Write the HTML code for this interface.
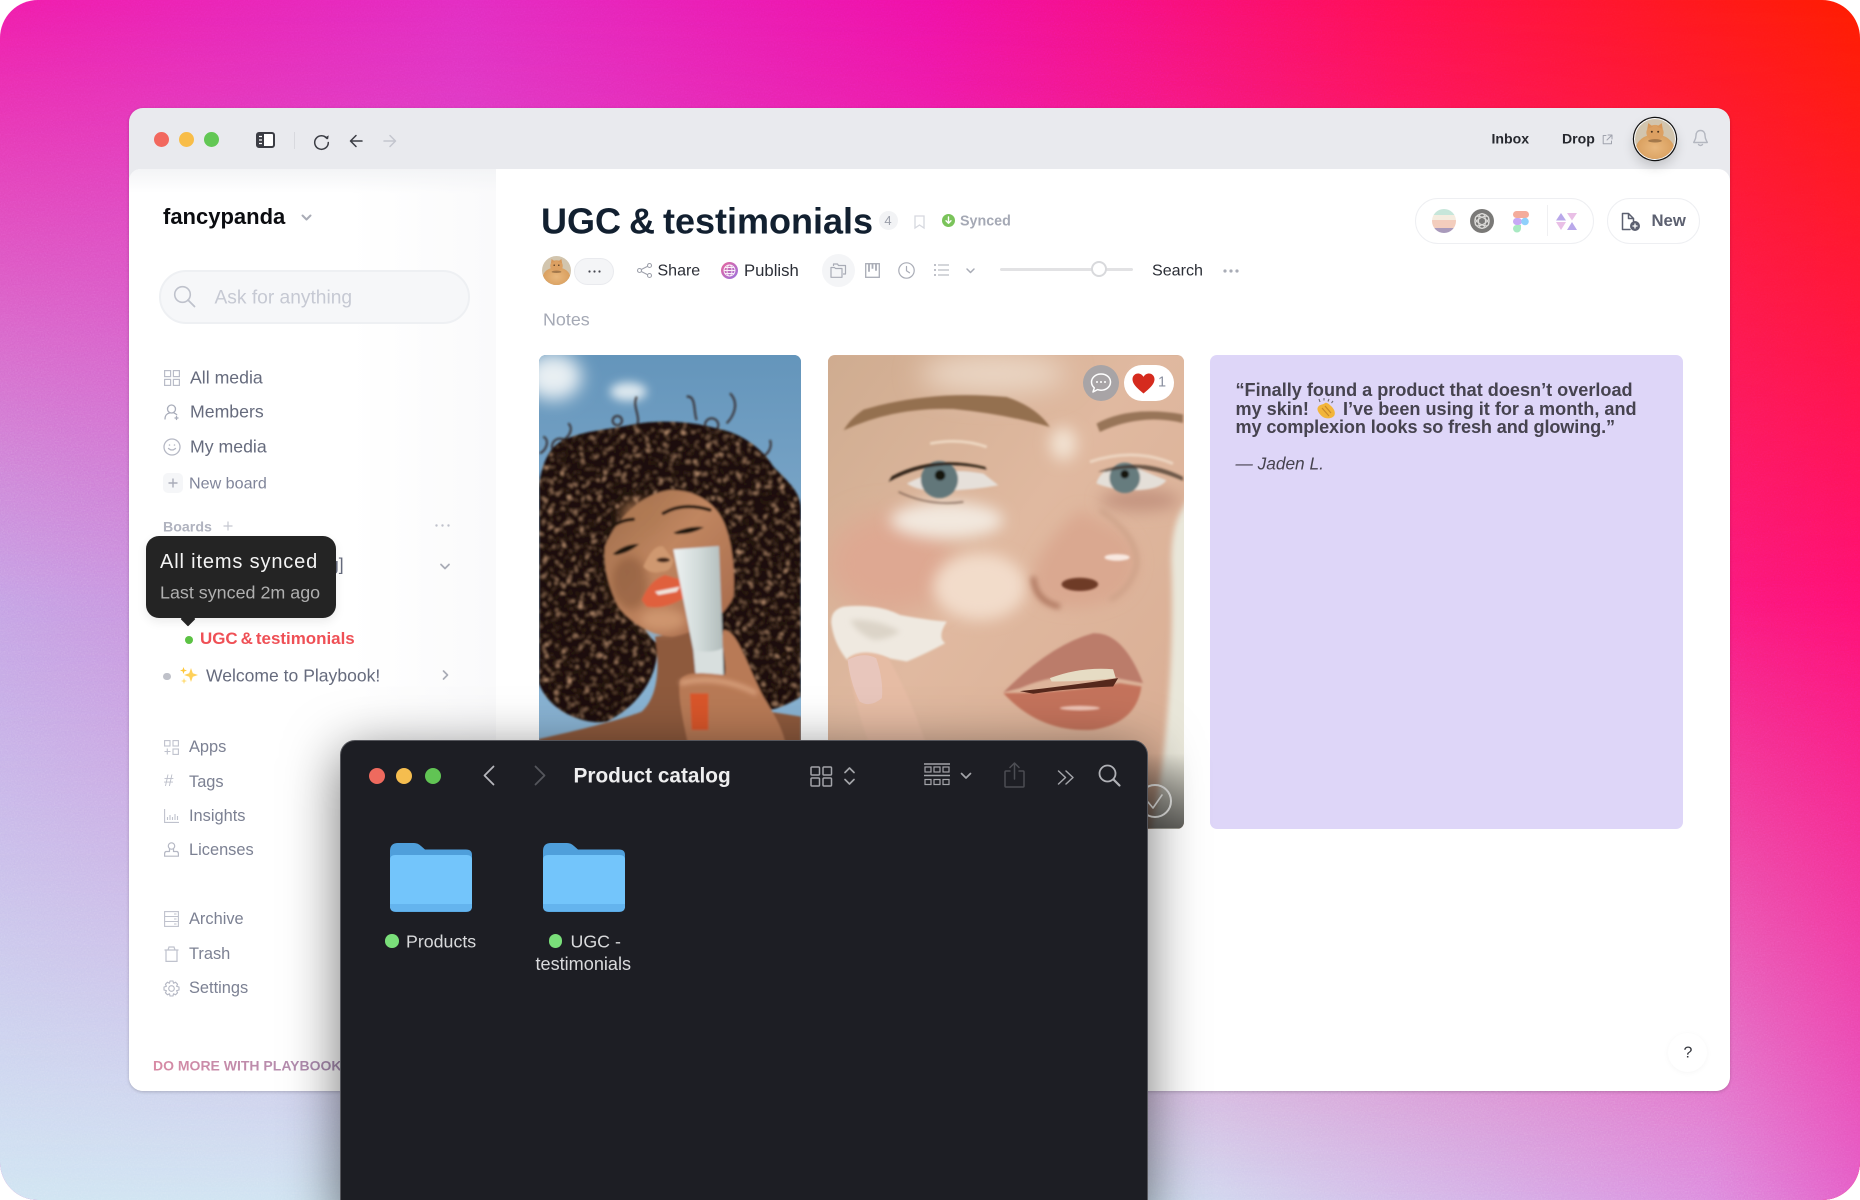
<!DOCTYPE html>
<html><head><meta charset="utf-8"><title>Playbook</title>
<style>
html,body{margin:0;padding:0;width:1860px;height:1200px;overflow:hidden;background:#fff;font-family:"Liberation Sans",sans-serif}
.a{position:absolute}
.t{position:absolute;white-space:nowrap;transform:translateY(-50%);line-height:1.2}
svg{display:block;overflow:visible}
.n{color:#666b7d;font-size:17.7px;left:190px}
.m{color:#7c8193;font-size:16.4px;left:189px}
.s{fill:none;stroke-linecap:round;stroke-linejoin:round}
.note{font-weight:700;font-size:18.1px;color:#46434f}
</style></head><body>
<div id="root" class="a" style="left:0;top:0;width:1860px;height:1200px;overflow:hidden">

<!-- background -->
<div class="a" style="left:0;top:0;width:1860px;height:1200px;border-radius:38px;overflow:hidden">
 <div class="a" style="inset:0;background:linear-gradient(90deg,#f01ca8 0%,#e22cc0 25%,#f010a4 50%,#ff0f50 75%,#ff1c00 100%)"></div>
 <div class="a" style="inset:0;background:linear-gradient(90deg,#c4a0e4 0%,#d268cc 30%,#e840a8 60%,#ff1070 100%);-webkit-mask-image:linear-gradient(180deg,transparent 0%,#000 50%);mask-image:linear-gradient(180deg,transparent 0%,#000 50%)"></div>
 <div class="a" style="inset:0;background:linear-gradient(90deg,#cfe4f2 0%,#cfdef0 62%,#d4aee6 80%,#dc8ade 92%,#e45cc6 100%);-webkit-mask-image:linear-gradient(180deg,transparent 50%,#000 100%);mask-image:linear-gradient(180deg,transparent 50%,#000 100%)"></div>
 <svg class="a" style="left:0;top:0;opacity:.3;mix-blend-mode:overlay" width="1860" height="1200"><filter id="gr"><feTurbulence type="fractalNoise" baseFrequency=".7" numOctaves="2" seed="5"/><feColorMatrix type="saturate" values="0"/></filter><rect width="1860" height="1200" filter="url(#gr)"/></svg>
</div>

<!-- browser window -->
<div class="a" style="left:129px;top:108px;width:1601px;height:983px;background:#e9eaee;border-radius:14px;box-shadow:0 1px 3px rgba(0,0,0,.2)"></div>
<div class="a" style="left:129px;top:169px;width:1601px;height:922px;background:#fff;border-radius:12px 12px 14px 14px;overflow:hidden">
 <div class="a" style="left:0;top:0;width:367px;height:922px;background:linear-gradient(90deg,#fff 0%,#fff 60%,#fafafb 100%)"></div>
 <div class="a" style="left:0;top:0;width:367px;height:24px;background:linear-gradient(180deg,#f3f4f6,rgba(255,255,255,0))"></div>
</div>

<!-- top bar -->
<div class="a" style="left:154px;top:132px;width:15px;height:15px;border-radius:50%;background:#f2685e"></div>
<div class="a" style="left:179px;top:132px;width:15px;height:15px;border-radius:50%;background:#f8bd48"></div>
<div class="a" style="left:203.500px;top:132px;width:15px;height:15px;border-radius:50%;background:#62c754"></div>
<svg class="a" style="left:256px;top:132px" width="19" height="16"><rect x="1" y="1" width="17" height="14" rx="2" fill="#fff" stroke="#3b3d44" stroke-width="2"/><rect x="1" y="1" width="7" height="14" fill="#3b3d44"/><path d="M3 4.500h3M3 8h3M3 11.500h3" stroke="#fff" stroke-width="1.300"/></svg>
<div class="a" style="left:293.500px;top:132px;width:1px;height:17px;background:#d8d9de"></div>
<svg class="a" style="left:313px;top:132.500px" width="17" height="17" viewBox="0 0 17 17"><path class="s" d="M14 5.500A6.800 6.800 0 1 0 15.300 9.500" stroke="#3b3d44" stroke-width="1.500"/><path d="M11.500 4.800l3.600 1.400.6-3.800z" fill="#3b3d44"/></svg>
<svg class="a" style="left:349px;top:134px" width="14" height="14" viewBox="0 0 14 14"><path class="s" d="M13 7H1.500M7 1.500L1.500 7 7 12.500" stroke="#3b3d44" stroke-width="1.500"/></svg>
<svg class="a" style="left:383px;top:134px" width="14" height="14" viewBox="0 0 14 14"><path class="s" d="M1 7h11.500M7 1.500L12.500 7 7 12.500" stroke="#c4c6ce" stroke-width="1.500"/></svg>

<span class="t" style="left:1491.500px;top:139px;font-weight:700;font-size:14.100px;color:#26282e">Inbox</span>
<span class="t" style="left:1562px;top:139px;font-weight:700;font-size:14.100px;color:#26282e">Drop</span>
<svg class="a" style="left:1602px;top:134px" width="11" height="11" viewBox="0 0 11 11"><path class="s" d="M4 1.500H1.200v8.300h8.300V7M6 1h4v4M10 1L5 6" stroke="#a0a3ad" stroke-width="1"/></svg>

<svg width="0" height="0" style="position:absolute"><defs>
<radialGradient id="cb" cx=".5" cy=".45" r=".6"><stop offset="0" stop-color="#e9b87e"/><stop offset="1" stop-color="#d69a58"/></radialGradient>
<symbol id="cat" viewBox="0 0 44 44"><clipPath id="cc"><circle cx="22" cy="22" r="22"/></clipPath><g clip-path="url(#cc)"><rect width="44" height="44" fill="#d2c5ae"/><rect y="32" width="44" height="12" fill="#bca284"/><ellipse cx="22" cy="33" rx="21" ry="16" fill="url(#cb)"/><ellipse cx="22" cy="15" rx="9.500" ry="8.500" fill="#dca062"/><path d="M13.500 11l1-6.500 5.500 4zM30.500 11l-1-6.500-5.500 4z" fill="#d8985a"/><circle cx="18.500" cy="14" r="1.100" fill="#4a3420"/><circle cx="25.500" cy="14" r="1.100" fill="#4a3420"/><ellipse cx="22" cy="24" rx="7.500" ry="1.800" fill="#7c5634" opacity=".6"/></g></symbol>
<linearGradient id="pubg" x1="0" y1="0" x2="1" y2="1"><stop offset="0" stop-color="#e9679c"/><stop offset="1" stop-color="#9a72e0"/></linearGradient>
</defs></svg>

<div class="a" style="left:1634px;top:117.500px;width:42px;height:42px;border-radius:50%;background:#fff;box-shadow:0 0 0 1.200px #111,0 6px 12px rgba(0,0,0,.18)"></div>
<svg class="a" style="left:1635px;top:118.500px" width="40" height="40"><use href="#cat"/></svg>
<svg class="a" style="left:1693px;top:129px" width="15" height="18" viewBox="0 0 15 18"><path class="s" d="M7.500 1.500C4.500 1.500 3 3.800 3 6.500c0 4-1.800 5.500-2.300 7h13.600c-.5-1.500-2.300-3-2.300-7 0-2.700-1.500-5-4.500-5zM5.500 15.500q2 2 4 0" stroke="#b4b7c0" stroke-width="1.400"/></svg>

<!-- sidebar -->
<span class="t" style="left:163px;top:217px;font-weight:700;font-size:22px;color:#0b0c10">fancypanda</span>
<svg class="a" style="left:301px;top:214px" width="11" height="7" viewBox="0 0 11 7"><path class="s" d="M1.500 1.500l4 4 4-4" stroke="#a9acb6" stroke-width="2"/></svg>

<div class="a" style="left:159px;top:270px;width:311px;height:54px;box-sizing:border-box;border:2px solid #eef0f3;border-radius:27px;background:#f6f7f9"></div>
<svg class="a" style="left:173px;top:285px" width="23" height="23" viewBox="0 0 23 23"><circle cx="9.500" cy="9.500" r="7.800" fill="none" stroke="#bfc2cc" stroke-width="1.600"/><path d="M15 15l6.500 6.500" stroke="#bfc2cc" stroke-width="1.800" stroke-linecap="round"/></svg>
<span class="t" style="left:214.500px;top:297.800px;font-size:19.200px;color:#c6c9d3">Ask for anything</span>

<svg class="a" style="left:164px;top:370px" width="16" height="16" viewBox="0 0 16 16"><g fill="none" stroke="#b9bcc8" stroke-width="1.200"><rect x=".6" y=".6" width="6" height="6"/><rect x="9.400" y=".6" width="6" height="6"/><rect x=".6" y="9.400" width="6" height="6"/><rect x="9.400" y="9.400" width="6" height="6"/></g></svg>
<span class="t n" style="top:377.500px">All media</span>
<svg class="a" style="left:164px;top:404px" width="16" height="16" viewBox="0 0 16 16"><g class="s" stroke="#a9adba" stroke-width="1.300"><circle cx="7.500" cy="5" r="4"/><path d="M1 15c0-3.500 2-5.500 4.500-6M10 9c1 .3 2 .8 2.700 1.800M12.500 12.500v3M11 14h3"/></g></svg>
<span class="t n" style="top:412px">Members</span>
<svg class="a" style="left:163px;top:438px" width="18" height="18" viewBox="0 0 18 18"><circle cx="9" cy="9" r="8" fill="none" stroke="#b5b8c4" stroke-width="1.300"/><path class="s" d="M5.500 10.500q3.500 3 7 0" stroke="#b5b8c4" stroke-width="1.300"/><circle cx="6.500" cy="7" r=".8" fill="#b5b8c4"/><circle cx="11.500" cy="7" r=".8" fill="#b5b8c4"/></svg>
<span class="t n" style="top:446.500px">My media</span>
<div class="a" style="left:163px;top:473px;width:20px;height:20px;border-radius:5px;background:#f5f6f8"></div>
<svg class="a" style="left:168px;top:478px" width="10" height="10"><path d="M5 .5v9M.5 5h9" stroke="#a9acb8" stroke-width="1.400"/></svg>
<span class="t" style="left:189px;top:484px;font-size:16.100px;color:#80859a">New board</span>

<span class="t" style="left:163px;top:527.800px;font-weight:700;font-size:14.200px;color:#b0b3bf">Boards</span>
<svg class="a" style="left:223px;top:521px" width="10" height="10"><path d="M5 .5v9M.5 5h9" stroke="#c5c7d0" stroke-width="1.200"/></svg>
<svg class="a" style="left:435px;top:524px" width="15" height="3"><circle cx="1.500" cy="1.500" r="1.200" fill="#bfc1cb"/><circle cx="7.500" cy="1.500" r="1.200" fill="#bfc1cb"/><circle cx="13.500" cy="1.500" r="1.200" fill="#bfc1cb"/></svg>
<span class="t" style="left:329px;top:565px;font-size:17.500px;color:#666b7d">g]</span>
<svg class="a" style="left:440px;top:563px" width="10" height="7" viewBox="0 0 10 7"><path class="s" d="M1 1.500l4 4 4-4" stroke="#a9acb6" stroke-width="1.800"/></svg>

<div class="a" style="left:185px;top:636px;width:8px;height:8px;border-radius:50%;background:#5cc244"></div>
<span class="t" style="left:200px;top:638.800px;font-weight:700;font-size:16.950px;word-spacing:-1.700px;color:#ef5056">UGC &amp; testimonials</span>
<div class="a" style="left:163px;top:672.500px;width:7.500px;height:7.500px;border-radius:50%;background:#bfc1c9"></div>
<svg class="a" style="left:179px;top:666px" width="20" height="20" viewBox="0 0 20 20"><path d="M12 2l1.800 5.200L19 9l-5.200 1.800L12 16l-1.800-5.200L5 9l5.200-1.800z" fill="#ffd15a"/><path d="M4.500 1l.9 2.600L8 4.500l-2.600.9L4.500 8l-.9-2.600L1 4.500l2.600-.9z" fill="#ffc83a"/><path d="M5 12l.8 2.200L8 15l-2.200.8L5 18l-.8-2.200L2 15l2.200-.8z" fill="#ffdd7a"/></svg>
<span class="t" style="left:206px;top:676px;font-size:17.560px;color:#666b7d">Welcome to Playbook!</span>
<svg class="a" style="left:442px;top:670px" width="7" height="10" viewBox="0 0 7 10"><path class="s" d="M1.500 1l4 4-4 4" stroke="#a9acb6" stroke-width="1.700"/></svg>

<svg class="a" style="left:164px;top:740px" width="15" height="15" viewBox="0 0 15 15"><g fill="none" stroke="#bfc2cd" stroke-width="1.100"><rect x=".6" y=".6" width="5.400" height="5.400"/><rect x="9" y=".6" width="5.400" height="5.400"/><rect x="9" y="9" width="5.400" height="5.400"/><path d="M3.300 8.500v6M.5 11.500h6"/></g></svg>
<span class="t m" style="top:748.200px">Apps</span>
<span class="t" style="left:164px;top:781px;font-size:17px;color:#bcbfca">#</span>
<span class="t m" style="top:782.700px">Tags</span>
<svg class="a" style="left:164px;top:808px" width="15" height="15" viewBox="0 0 15 15"><path d="M.6 1v13.400H15M3.500 12V9M6 12V7M8.500 12V9M11 12V6M13.500 12V8" fill="none" stroke="#bfc2cd" stroke-width="1.100"/></svg>
<span class="t m" style="top:817.200px">Insights</span>
<svg class="a" style="left:164px;top:842px" width="15" height="16" viewBox="0 0 15 16"><g class="s" stroke="#b5b8c4" stroke-width="1.200"><circle cx="7.500" cy="4" r="3.200"/><path d="M5.500 7v2.500H2q-1.400.5-1.400 2.200v2.500h13.800v-2.500q0-1.700-1.400-2.200H9.500V7"/></g></svg>
<span class="t m" style="top:851.200px">Licenses</span>
<svg class="a" style="left:164px;top:911px" width="15" height="16" viewBox="0 0 15 16"><g fill="none" stroke="#bfc2cd" stroke-width="1.100"><rect x=".6" y=".6" width="13.800" height="14.800"/><path d="M.6 5.500h13.800M.6 10.500h13.800M10 3h2.500M10 8h2.500M10 13h2.500"/></g></svg>
<span class="t m" style="top:919.700px">Archive</span>
<svg class="a" style="left:164px;top:946px" width="15" height="16" viewBox="0 0 15 16"><g fill="none" stroke="#bfc2cd" stroke-width="1.200"><path d="M2 4v11.400h11V4M.5 4h14M4 4l1-3h5l1 3"/></g></svg>
<span class="t m" style="top:954.600px">Trash</span>
<svg class="a" style="left:163px;top:980px" width="17" height="17" viewBox="0 0 17 17"><g fill="none" stroke="#b5b8c4" stroke-width="1.100"><circle cx="8.500" cy="8.500" r="2.800"/><path d="M7 1h3l.5 2.200 2-1 2.100 2.100-1 2 2.400.7v3l-2.400.7 1 2-2.100 2.100-2-1L10 16H7l-.5-2.200-2 1-2.100-2.100 1-2L1 10V7l2.400-.7-1-2 2.100-2.100 2 1z" stroke-linejoin="round"/></g></svg>
<span class="t m" style="top:988.700px">Settings</span>
<span class="t" style="left:153px;top:1066px;font-weight:700;font-size:14px;background:linear-gradient(90deg,#d88aa4,#a68db2);-webkit-background-clip:text;background-clip:text;color:transparent">DO MORE WITH PLAYBOOK</span>

<!-- header -->
<span class="t" style="left:541px;top:220.500px;font-weight:700;font-size:36px;word-spacing:-2px;color:#122030">UGC &amp; testimonials</span>
<div class="a" style="left:878.500px;top:211px;width:19px;height:19px;border-radius:50%;background:#f2f3f5;text-align:center;line-height:19px;font-size:13px;color:#9a9ea9">4</div>
<svg class="a" style="left:914px;top:215px" width="11" height="14" viewBox="0 0 11 14"><path d="M1 1h9v12L5.500 10 1 13z" fill="none" stroke="#d6d8df" stroke-width="1.300"/></svg>
<svg class="a" style="left:942px;top:214px" width="13" height="13" viewBox="0 0 13 13"><circle cx="6.500" cy="6.500" r="6.500" fill="#7ac35a"/><path class="s" d="M6.500 3v6M4 6.800l2.500 2.400L9 6.800" stroke="#fff" stroke-width="1.400"/></svg>
<span class="t" style="left:960px;top:221.500px;font-weight:700;font-size:14.300px;color:#a5a9b5">Synced</span>

<!-- app pill -->
<div class="a" style="left:1415px;top:198px;width:179px;height:46px;box-sizing:border-box;border:1.500px solid #eeeff2;border-radius:23px;background:#fff"></div>
<svg class="a" style="left:1432px;top:208.500px" width="24" height="24" viewBox="0 0 24 24"><clipPath id="c1"><circle cx="12" cy="12" r="12"/></clipPath><g clip-path="url(#c1)"><rect width="24" height="6" fill="#c7e6da"/><rect y="6" width="24" height="5" fill="#f5ecdf"/><rect y="11" width="24" height="8" fill="#f3cdbd"/><rect y="19" width="24" height="5" fill="#a99abb"/></g></svg>
<svg class="a" style="left:1470px;top:208.500px" width="24" height="24" viewBox="0 0 24 24"><circle cx="12" cy="12" r="12" fill="#7a7977"/><g fill="none" stroke="#dcdbd8" stroke-width="1.100"><circle cx="12" cy="12" r="7.200"/><ellipse cx="12" cy="12" rx="7.500" ry="3.500" transform="rotate(30 12 12)"/><ellipse cx="12" cy="12" rx="7.500" ry="3.500" transform="rotate(-30 12 12)"/><ellipse cx="12" cy="12" rx="7.500" ry="3.500" transform="rotate(90 12 12)"/></g></svg>
<svg class="a" style="left:1513px;top:211px" width="16" height="21" viewBox="0 0 16 21"><rect x="0" y="0" width="16" height="7" rx="3.500" fill="#f4ac9b"/><rect x="0" y="7" width="9" height="7" rx="3.500" fill="#c7a9f5"/><circle cx="12" cy="10.500" r="3.800" fill="#8fd0fb"/><path d="M0 17.500A3.500 3.500 0 0 1 3.500 14H8v3.500a3.500 3.500 0 0 1-8 0z" fill="#a9e9c2"/></svg>
<div class="a" style="left:1547px;top:205px;width:1px;height:31px;background:#f0f0f2"></div>
<svg class="a" style="left:1556px;top:212.500px" width="21" height="17" viewBox="0 0 21 17"><path d="M0 7.500L5 0l5 7.500z" fill="#b9a8ea"/><path d="M0 9h10l-5 8z" fill="#e9bfe6"/><path d="M11 0h10l-5 7.500z" fill="#e9bfe6"/><path d="M16 9l5 8H11z" fill="#b9a8ea"/></svg>

<div class="a" style="left:1607px;top:198px;width:93px;height:46px;box-sizing:border-box;border:1.500px solid #eeeff2;border-radius:23px;background:#fff"></div>
<svg class="a" style="left:1621px;top:212px" width="20" height="20" viewBox="0 0 20 20"><path class="s" d="M9 17.500H1.500V1.500h6l5 5V9M7.500 1.500v5h5" stroke="#5c6070" stroke-width="1.500"/><circle cx="14" cy="14" r="5" fill="#5c6070"/><path d="M14 11.500v5M11.500 14h5" stroke="#fff" stroke-width="1.300"/></svg>
<span class="t" style="left:1651.500px;top:220.500px;font-weight:700;font-size:16.700px;color:#5c6070">New</span>

<!-- toolbar -->
<svg class="a" style="left:542px;top:256px" width="29" height="29"><use href="#cat"/></svg>
<div class="a" style="left:574px;top:258px;width:40px;height:27px;box-sizing:border-box;border:1.500px solid #e9eaee;border-radius:14px;background:#f4f5f7"></div>
<svg class="a" style="left:588px;top:270px" width="13" height="3"><circle cx="1.500" cy="1.500" r="1.100" fill="#44464e"/><circle cx="6.500" cy="1.500" r="1.100" fill="#44464e"/><circle cx="11.500" cy="1.500" r="1.100" fill="#44464e"/></svg>
<svg class="a" style="left:637px;top:263px" width="15" height="15" viewBox="0 0 15 15"><g fill="none" stroke="#9ea1ab" stroke-width="1.100"><circle cx="2.500" cy="7.500" r="2"/><circle cx="12.500" cy="2.500" r="2"/><circle cx="12.500" cy="12.500" r="2"/><path d="M4.300 6.500l6.400-3.200M4.300 8.500l6.400 3.200"/></g></svg>
<span class="t" style="left:657.500px;top:270.800px;font-size:16px;color:#2b2e36">Share</span>
<svg class="a" style="left:721px;top:262px" width="17" height="17" viewBox="0 0 17 17"><circle cx="8.500" cy="8.500" r="8.500" fill="url(#pubg)"/><g fill="none" stroke="#fff" stroke-width=".9" opacity=".9"><circle cx="8.500" cy="8.500" r="5.500"/><ellipse cx="8.500" cy="8.500" rx="2.500" ry="5.500"/><path d="M3 8.500h11M4 5.500h9M4 11.500h9"/></g></svg>
<span class="t" style="left:744px;top:270.800px;font-size:16.700px;color:#2b2e36">Publish</span>
<div class="a" style="left:821.500px;top:254px;width:33px;height:33px;border-radius:50%;background:#f4f5f7"></div>
<svg class="a" style="left:830px;top:263px" width="17" height="15" viewBox="0 0 17 15"><g fill="none" stroke="#a9acb6" stroke-width="1.200" stroke-linejoin="round"><path d="M1 4.500h3.500l1 1h6.500v8.800H1z"/><path d="M3.500 3V1h4l1 1.500h7V11H13"/></g></svg>
<svg class="a" style="left:865px;top:263px" width="15" height="15" viewBox="0 0 15 15"><rect x=".7" y=".7" width="13.600" height="13.600" fill="none" stroke="#a9acb6" stroke-width="1.300"/><path d="M4 .7v8M7.500 .7v5M11 .7v7" stroke="#a9acb6" stroke-width="1.800"/></svg>
<svg class="a" style="left:898px;top:262px" width="17" height="17" viewBox="0 0 17 17"><circle cx="8.500" cy="8.500" r="7.700" fill="none" stroke="#a9acb6" stroke-width="1.200"/><path class="s" d="M8.500 4.500v4.300l3 2" stroke="#a9acb6" stroke-width="1.200"/></svg>
<svg class="a" style="left:934px;top:263px" width="15" height="14" viewBox="0 0 15 14"><path d="M4 2h11M4 7h11M4 12h11" stroke="#a9acb6" stroke-width="1.100"/><circle cx="1" cy="2" r="1" fill="#a9acb6"/><circle cx="1" cy="7" r="1" fill="#a9acb6"/><circle cx="1" cy="12" r="1" fill="#a9acb6"/></svg>
<svg class="a" style="left:966px;top:268px" width="9" height="6" viewBox="0 0 9 6"><path class="s" d="M1 1l3.500 3.500L8 1" stroke="#a9acb6" stroke-width="1.500"/></svg>
<div class="a" style="left:1000px;top:268px;width:133px;height:3px;border-radius:2px;background:#e2e2e4"></div>
<div class="a" style="left:1091px;top:261px;width:16px;height:16px;box-sizing:border-box;border:2.500px solid #d8d9dc;border-radius:50%;background:#fff"></div>
<span class="t" style="left:1152px;top:270.800px;font-size:16.100px;color:#2b2e36">Search</span>
<svg class="a" style="left:1223px;top:268.500px" width="16" height="4"><circle cx="2" cy="2" r="1.600" fill="#a9acb6"/><circle cx="8" cy="2" r="1.600" fill="#a9acb6"/><circle cx="14" cy="2" r="1.600" fill="#a9acb6"/></svg>

<span class="t" style="left:543px;top:319.500px;font-size:17.900px;color:#a5a9b5">Notes</span>

<!-- photo 1 -->
<div class="a" style="left:539px;top:355px;width:262px;height:400px;border-radius:7px;overflow:hidden;background:#6f9fc4">
<svg width="262" height="400" viewBox="27 15 786 1200">
<defs>
<linearGradient id="sky" x1="0" y1="0" x2="0" y2="1"><stop offset="0" stop-color="#6495bb"/><stop offset=".5" stop-color="#7fa9ca"/><stop offset="1" stop-color="#8cb6d6"/></linearGradient>
<filter id="b30" x="-100%" y="-100%" width="300%" height="300%"><feGaussianBlur stdDeviation="26"/></filter>
<filter id="b12" x="-100%" y="-100%" width="300%" height="300%"><feGaussianBlur stdDeviation="14"/></filter>
<filter id="b6" x="-100%" y="-100%" width="300%" height="300%"><feGaussianBlur stdDeviation="6"/></filter>
<filter id="b3" x="-10%" y="-10%" width="120%" height="120%"><feGaussianBlur stdDeviation="3"/></filter>
<filter id="hairT" x="0" y="0" width="100%" height="100%"><feTurbulence type="fractalNoise" baseFrequency=".055" numOctaves="3" seed="7" result="n"/><feColorMatrix in="n" type="matrix" values="0 0 0 0 .60  0 0 0 0 .34  0 0 0 0 .20  3.200 0 0 0 -1.720"/><feComposite in2="SourceAlpha" operator="in"/><feGaussianBlur stdDeviation="1.500"/></filter>
<linearGradient id="face1" x1="0" y1="0" x2="1" y2="1"><stop offset="0" stop-color="#9a6a48"/><stop offset=".45" stop-color="#c08660"/><stop offset="1" stop-color="#a5684a"/></linearGradient>
<linearGradient id="tube" x1="0" y1="0" x2="1" y2="0"><stop offset="0" stop-color="#eef2f2"/><stop offset=".5" stop-color="#d2dbda"/><stop offset="1" stop-color="#b0bbba"/></linearGradient>
<path id="hp" d="M27 400C40 330 60 290 100 270C170 240 230 240 300 225C370 210 470 210 560 235C640 250 700 300 730 350C780 400 813 430 813 480V1040C780 1060 730 1085 700 1080L520 1000L500 620C480 500 430 500 380 500C320 520 300 600 300 660C300 720 320 830 380 880C390 960 340 1060 230 1115C170 1125 60 1090 27 1000Z"/>
</defs>
<rect x="27" y="15" width="786" height="1200" fill="url(#sky)"/>
<ellipse cx="70" cy="80" rx="85" ry="70" fill="#e8eff3" filter="url(#b30)"/>
<ellipse cx="295" cy="125" rx="55" ry="28" fill="#dde8ef" filter="url(#b12)"/>
<g filter="url(#b3)">
<use href="#hp" fill="#1f110b"/>
<use href="#hp" filter="url(#hairT)"/>
<g fill="none" stroke="#2a1a13" stroke-width="6" opacity=".8"><circle cx="90" cy="290" r="24"/><circle cx="545" cy="225" r="20"/><circle cx="262" cy="212" r="14"/><path d="M320 140c-15 30 15 60 0 90M470 140c30-5 20 50 30 70M600 130c30 30 10 70-10 90M720 270c10 30-15 45-20 50M115 220c20 20-5 50-20 50M40 260c20 10 10 40-10 50"/></g>
<path d="M375 860L520 840L560 1060L813 1100V1220H27V1167C150 1140 270 1110 335 1085C385 1040 390 950 375 860Z" fill="#8e5a3e"/>
<path d="M225 590C260 500 340 430 420 420C510 420 570 470 590 540C610 600 615 680 610 740C590 790 530 840 430 860C360 860 295 810 265 770C235 710 220 650 225 590Z" fill="url(#face1)"/>
<ellipse cx="300" cy="700" rx="55" ry="80" fill="#6e4028" opacity=".4" filter="url(#b12)"/>
<ellipse cx="330" cy="490" rx="60" ry="40" fill="#b07a52" opacity=".7" filter="url(#b12)"/>
<ellipse cx="400" cy="810" rx="70" ry="35" fill="#d49c74" opacity=".8" filter="url(#b12)"/>
<path class="s" d="M225 550Q260 510 310 508" stroke="#23130c" stroke-width="10"/>
<path class="s" d="M400 490Q460 455 540 480" stroke="#23130c" stroke-width="10"/>
<path d="M248 612Q285 580 328 582Q295 610 258 615z" fill="#1e120d"/>
<path d="M430 548Q480 525 522 532Q480 555 438 552z" fill="#1e120d"/>
<path d="M340 650Q370 580 400 590L430 630Q425 665 395 665Q360 675 340 650z" fill="#cf9870"/>
<ellipse cx="400" cy="630" rx="20" ry="7" fill="#3c2014"/>
<path d="M335 750Q360 690 405 675L455 690L460 745Q400 780 350 770z" fill="#e0603c"/>
<path d="M375 725L450 710L440 725L385 735z" fill="#f0e4dc"/>
<path d="M430 598L567 588L582 975H497L490 900z" fill="url(#tube)"/>
<path d="M492 900Q540 912 578 895V975H497z" fill="#d8dfde"/>
<path d="M580 840C620 840 640 920 700 1040C730 1090 770 1150 770 1215H480C470 1150 440 1050 450 990C470 960 530 970 585 975C590 930 570 880 580 840Z" fill="#b87a56"/>
<path d="M480 1030h55v110h-50z" fill="#d9562c"/>
<path d="M450 1000Q560 970 680 1030" stroke="#e2ac88" stroke-width="16" fill="none" opacity=".7" filter="url(#b6)"/>
</g>
</svg></div>

<!-- photo 2 -->
<div class="a" style="left:828px;top:355px;width:356px;height:474px;border-radius:7px;overflow:hidden;background:#d6ae94">
<svg width="356" height="474" viewBox="23 15 1070 1422">
<defs>
<linearGradient id="sk" x1="0" y1="0" x2="1" y2="1"><stop offset="0" stop-color="#cfac90"/><stop offset=".45" stop-color="#e0b9a0"/><stop offset="1" stop-color="#d8ac92"/></linearGradient>
<linearGradient id="bf" x1="0" y1="0" x2="0" y2="1"><stop offset="0" stop-color="#000" stop-opacity="0"/><stop offset="1" stop-color="#2a2a2a" stop-opacity=".72"/></linearGradient>
<filter id="c40" x="-100%" y="-100%" width="300%" height="300%"><feGaussianBlur stdDeviation="40"/></filter>
<filter id="c20" x="-100%" y="-100%" width="300%" height="300%"><feGaussianBlur stdDeviation="22"/></filter>
<filter id="c8" x="-50%" y="-50%" width="200%" height="200%"><feGaussianBlur stdDeviation="9"/></filter>
<filter id="c3" x="-30%" y="-30%" width="160%" height="160%"><feGaussianBlur stdDeviation="3.500"/></filter>
</defs>
<rect x="23" y="15" width="1070" height="1422" fill="url(#sk)"/>
<path d="M1130 420V1460H990C1040 1250 1065 900 1055 640C1055 560 1065 480 1130 420Z" fill="#e9e7da" filter="url(#c8)"/>
<ellipse cx="520" cy="70" rx="220" ry="60" fill="#ead6c4" filter="url(#c40)"/>
<ellipse cx="210" cy="640" rx="190" ry="150" fill="#dea892" filter="url(#c40)"/>
<ellipse cx="380" cy="510" rx="170" ry="55" fill="#f2e8de" filter="url(#c20)"/>
<ellipse cx="480" cy="710" rx="140" ry="100" fill="#f2dcca" filter="url(#c20)"/>
<ellipse cx="730" cy="280" rx="40" ry="50" fill="#f2e2d2" filter="url(#c20)"/>
<ellipse cx="960" cy="450" rx="120" ry="34" fill="#c49480" filter="url(#c20)"/>
<g filter="url(#c3)">
<path d="M130 178Q330 118 560 140Q650 170 690 230Q560 192 400 176Q220 170 70 240Q90 205 130 178Z" fill="#94704f"/>
<path d="M830 220Q930 165 1090 192V218Q960 188 840 245Z" fill="#987458"/>
<path d="M260 400Q360 345 490 370L535 405Q430 425 330 420Q290 420 260 400Z" fill="#e6e0da"/>
<circle cx="358" cy="388" r="56" fill="#62777a"/>
<circle cx="360" cy="375" r="16" fill="#15120f"/>
<path d="M205 395Q340 320 500 358L495 350Q340 312 215 378Z" fill="#2d2018"/>
<path d="M235 425Q330 470 430 455" stroke="#6a5040" stroke-width="6" fill="none" opacity=".6"/>
<path d="M830 400Q840 350 930 345L1040 390Q1020 420 940 420Q880 420 830 400Z" fill="#e4dfd8"/>
<circle cx="915" cy="383" r="46" fill="#667b7e"/>
<circle cx="915" cy="372" r="13" fill="#15120f"/>
<path d="M835 365Q960 315 1090 380V392Q960 335 860 365Z" fill="#3a2c22" opacity=".7"/>
<path d="M810 335Q940 290 1060 340" stroke="#ecd4c0" stroke-width="9" fill="none"/>
<path d="M330 280Q420 262 500 290" stroke="#eed8c2" stroke-width="8" fill="none"/>
</g>
<path d="M640 700Q640 600 780 480L900 540Q960 590 950 660Q920 740 870 750Q780 790 680 760Q640 740 640 700Z" fill="#daa890" filter="url(#c20)"/>
<path d="M640 680Q645 755 720 770" stroke="#a86f58" stroke-width="14" fill="none" filter="url(#c8)"/>
<path d="M840 480Q960 560 950 650Q930 720 870 750" stroke="#c49a80" stroke-width="8" fill="none" filter="url(#c8)"/>
<ellipse cx="780" cy="703" rx="55" ry="20" fill="#6e3a28" filter="url(#c3)"/>
<ellipse cx="892" cy="622" rx="38" ry="10" fill="#f8e8e0" filter="url(#c3)"/>
<path d="M550 1028Q690 885 820 850Q910 845 970 1000L890 985Q740 955 600 1015Z" fill="#bb7c6a" filter="url(#c3)"/>
<path d="M550 1030Q720 1030 900 1000L965 1010Q950 1120 820 1140Q660 1150 550 1030Z" fill="#c4735c" filter="url(#c3)"/>
<path d="M600 1024Q750 1008 895 985L880 1010Q740 1016 640 1032z" fill="#56281c"/>
<path d="M690 985Q780 950 880 958L888 985Q780 996 695 995z" fill="#e6dcc4"/>
<ellipse cx="780" cy="1075" rx="60" ry="7" fill="#eec4b6" filter="url(#c3)"/>
<path d="M33 820Q30 780 70 770Q170 760 240 795Q320 810 380 815Q350 860 375 880Q320 910 260 935L205 925Q130 900 80 930Q40 880 33 820Z" fill="#efe9e0" filter="url(#c3)"/>
<path d="M90 810Q170 805 240 845Q200 870 160 870Q110 850 90 810z" fill="#dcd4c8" filter="url(#c8)"/>
<path d="M82 925Q130 890 205 925Q270 1040 320 1190H150Q100 1060 82 925Z" fill="#e6bca4" filter="url(#c3)"/>
<path d="M82 930Q130 905 168 925Q190 990 185 1045Q150 1075 118 1055Q90 1000 82 930Z" fill="#e8c6bc"/>
<rect x="23" y="1210" width="1070" height="227" fill="url(#bf)"/>
</svg>
<div class="a" style="left:255px;top:10px;width:36px;height:36px;border-radius:50%;background:#a8a4a6"></div>
<svg class="a" style="left:262px;top:18px" width="22" height="20" viewBox="0 0 22 20"><path d="M11 1C5.500 1 1.500 4.700 1.500 9c0 2.400 1 4.300 2.800 5.800L3 19l4.500-2.400c1.100.4 2.200.6 3.500.6 5.500 0 9.500-3.700 9.500-8.200S16.500 1 11 1z" fill="none" stroke="#fff" stroke-width="1.500" stroke-linejoin="round"/><circle cx="7" cy="9" r="1" fill="#fff"/><circle cx="11" cy="9" r="1" fill="#fff"/><circle cx="15" cy="9" r="1" fill="#fff"/></svg>
<div class="a" style="left:296px;top:10px;width:50px;height:36px;border-radius:18px;background:#fff"></div>
<svg class="a" style="left:304px;top:18px" width="23" height="21" viewBox="0 0 23 21"><path d="M11.500 20.500C5 15 .5 11 .5 6.300.5 2.800 3.200.5 6 .5c2.300 0 4.300 1.200 5.500 3.400C12.700 1.700 14.700.5 17 .5c2.800 0 5.500 2.300 5.500 5.800 0 4.700-4.500 8.700-11 14.200z" fill="#d52b1e"/></svg>
<span class="t" style="left:330px;top:28px;font-size:14.500px;color:#8a8f9f">1</span>
<svg class="a" style="left:309px;top:428px" width="36" height="36" viewBox="0 0 36 36"><circle cx="18" cy="18" r="16" fill="none" stroke="#dededc" stroke-width="2"/><path class="s" d="M11 19l5 6 9-13" stroke="#dededc" stroke-width="1.600"/></svg>
</div>

<!-- note card -->
<div class="a" style="left:1209.500px;top:355px;width:473.500px;height:474px;border-radius:7px;background:#ded6f8"></div>
<span class="t note" style="left:1235.500px;top:391px">“Finally found a product that doesn’t overload</span>
<span class="t note" style="left:1235.500px;top:410px">my skin!</span>
<svg class="a" style="left:1314px;top:397px" width="24" height="23" viewBox="0 0 24 23"><path d="M4 10C6 7 9 8 11 6c2-1 5 2 7 4s4 6 2 9c-3 3-8 3-11 1-3-2-7-7-5-10z" fill="#f2b53a"/><path d="M8 11l7 8M11 9l6 7" stroke="#c9882a" stroke-width="1.200"/><path d="M5 2l1 3M10 1v2.500M15 2l-1 2.500M19 4l-1.500 2" stroke="#6a6a72" stroke-width="1.100"/></svg>
<span class="t note" style="left:1343px;top:410px">I’ve been using it for a month, and</span>
<span class="t note" style="left:1235.500px;top:428.300px;letter-spacing:-.11px">my complexion looks so fresh and glowing.”</span>
<span class="t" style="left:1235.500px;top:464px;font-style:italic;font-size:17.300px;color:#46434f">— Jaden L.</span>

<!-- help -->
<div class="a" style="left:1668px;top:1033px;width:39px;height:39px;border-radius:50%;background:#fff;box-shadow:0 1px 6px rgba(0,0,0,.04)"></div>
<span class="t" style="left:1683.500px;top:1052.500px;font-size:16px;color:#33353c">?</span>

<!-- tooltip -->
<div class="a" style="left:146px;top:536px;width:190px;height:82px;border-radius:13px;background:#242424;box-shadow:0 4px 10px rgba(0,0,0,.08)"></div>
<div class="a" style="left:181px;top:612px;width:14px;height:14px;background:#242424;transform:rotate(45deg) scale(.75);border-radius:1px"></div>
<span class="t" style="left:160px;top:562.300px;font-size:20px;letter-spacing:.85px;color:#f4f4f4">All items synced</span>
<span class="t" style="left:160px;top:592.800px;font-size:17.900px;color:#b0b0b0">Last synced 2m ago</span>

<!-- finder -->
<div class="a" style="left:340px;top:739.500px;width:808px;height:480px;box-sizing:border-box;background:#1d1e24;border:1.500px solid #55565c;border-radius:15px 15px 0 0;box-shadow:0 12px 55px rgba(0,0,0,.55)"></div>
<div class="a" style="left:368.500px;top:767.500px;width:16px;height:16px;border-radius:50%;background:#ee6a5e"></div>
<div class="a" style="left:396px;top:767.500px;width:16px;height:16px;border-radius:50%;background:#f5bd4f"></div>
<div class="a" style="left:424.500px;top:767.500px;width:16px;height:16px;border-radius:50%;background:#61c454"></div>
<svg class="a" style="left:482px;top:765px" width="14" height="21" viewBox="0 0 14 21"><path class="s" d="M11.500 1.500L2.500 10.500l9 9" stroke="#b6b7bc" stroke-width="1.800"/></svg>
<svg class="a" style="left:533px;top:765px" width="14" height="21" viewBox="0 0 14 21"><path class="s" d="M2.500 1.500l9 9-9 9" stroke="#55565c" stroke-width="1.800"/></svg>
<span class="t" style="left:573.500px;top:776.500px;font-weight:700;font-size:20.800px;color:#eeeeef">Product catalog</span>
<svg class="a" style="left:810px;top:766px" width="23" height="21" viewBox="0 0 23 21"><g fill="none" stroke="#a3a4a9" stroke-width="1.500"><rect x="1" y="1" width="8.500" height="8" rx="1"/><rect x="13" y="1" width="8.500" height="8" rx="1"/><rect x="1" y="12" width="8.500" height="8" rx="1"/><rect x="13" y="12" width="8.500" height="8" rx="1"/></g></svg>
<svg class="a" style="left:843px;top:766px" width="13" height="20" viewBox="0 0 13 20"><path class="s" d="M2 6.500L6.500 2 11 6.500M2 13.500L6.500 18 11 13.500" stroke="#a3a4a9" stroke-width="1.700"/></svg>
<svg class="a" style="left:924px;top:763px" width="26" height="25" viewBox="0 0 26 25"><path d="M0 1h26M0 12.500h26" stroke="#a3a4a9" stroke-width="1.500"/><g fill="none" stroke="#a3a4a9" stroke-width="1.200"><rect x="1" y="4" width="6" height="5"/><rect x="10" y="4" width="6" height="5"/><rect x="19" y="4" width="6" height="5"/><rect x="1" y="16.500" width="6" height="5"/><rect x="10" y="16.500" width="6" height="5"/><rect x="19" y="16.500" width="6" height="5"/></g></svg>
<svg class="a" style="left:960px;top:772px" width="12" height="8" viewBox="0 0 12 8"><path class="s" d="M1.500 1.500L6 6l4.500-4.500" stroke="#a3a4a9" stroke-width="1.700"/></svg>
<svg class="a" style="left:1004px;top:762px" width="21" height="26" viewBox="0 0 21 26"><g class="s" stroke="#4c4d53" stroke-width="1.500"><path d="M6 9H2q-1 0-1 1v14q0 1 1 1h17q1 0 1-1V10q0-1-1-1h-4M10.500 17V1.500M6 5.500l4.500-4.500L15 5.500"/></g></svg>
<svg class="a" style="left:1057px;top:770px" width="18" height="15" viewBox="0 0 18 15"><path class="s" d="M1.500 1l7 6.500-7 6.500M9 1l7 6.500-7 6.500" stroke="#a3a4a9" stroke-width="1.500"/></svg>
<svg class="a" style="left:1098px;top:764px" width="23" height="23" viewBox="0 0 23 23"><circle cx="9.500" cy="9.500" r="8" fill="none" stroke="#b0b1b6" stroke-width="1.800"/><path d="M15.500 15.500l6 6" stroke="#b0b1b6" stroke-width="2.200" stroke-linecap="round"/></svg>

<svg class="a" style="left:390px;top:842px" width="82" height="70" viewBox="0 0 82 70"><path d="M0 9Q0 1 8 1H24Q28 1 31 4L35 7.500H76Q82 7.500 82 13V64Q82 70 76 70H6Q0 70 0 64Z" fill="#4f9fdb"/><path d="M0 18Q0 13 5 13H77Q82 13 82 18V64Q82 69 77 69H5Q0 69 0 64Z" fill="#73c5fb"/><path d="M0 62H82V64Q82 69.500 77 69.500H5Q0 69.500 0 64Z" fill="#64b4ee"/></svg>
<svg class="a" style="left:543px;top:842px" width="82" height="70" viewBox="0 0 82 70"><path d="M0 9Q0 1 8 1H24Q28 1 31 4L35 7.500H76Q82 7.500 82 13V64Q82 70 76 70H6Q0 70 0 64Z" fill="#4f9fdb"/><path d="M0 18Q0 13 5 13H77Q82 13 82 18V64Q82 69 77 69H5Q0 69 0 64Z" fill="#73c5fb"/><path d="M0 62H82V64Q82 69.500 77 69.500H5Q0 69.500 0 64Z" fill="#64b4ee"/></svg>
<div class="a" style="left:385px;top:934px;width:13.500px;height:13.500px;border-radius:50%;background:#7adf7a"></div>
<span class="t" style="left:406px;top:941.500px;font-size:17.800px;color:#d9dadc">Products</span>
<div class="a" style="left:548.500px;top:934px;width:13.500px;height:13.500px;border-radius:50%;background:#7adf7a"></div>
<span class="t" style="left:570.500px;top:941.500px;font-size:17.800px;color:#d9dadc">UGC -</span>
<span class="t" style="left:535.500px;top:965px;font-size:18.100px;color:#d9dadc">testimonials</span>

</div>
</body></html>
